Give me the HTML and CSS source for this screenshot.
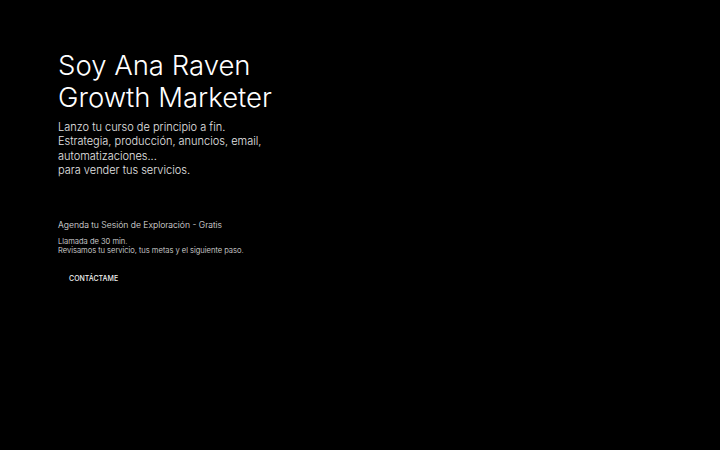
FILE: index.html
```html
<!DOCTYPE html>
<html lang="es">
<head>
<meta charset="utf-8">
<title>Ana Raven</title>
<link rel="stylesheet" href="styles.css">
</head>
<body>
<main class="hero">
  <h1 class="title"><span>Soy Ana Raven</span><span>Growth Marketer</span></h1>
  <p class="lead">Lanzo tu curso de principio a fin.<br>Estrategia, producción, anuncios, email,<br>automatizaciones...<br>para vender tus servicios.</p>
  <h2 class="cta-title">Agenda tu Sesión de Exploración - Gratis</h2>
  <p class="cta-text">Llamada de 30 min.<br>Revisamos tu servicio, tus metas y el siguiente paso.</p>
  <a class="cta-button" href="#">CONTÁCTAME</a>
</main>
</body>
</html>
```
FILE: styles.css
```css
html, body {
  margin: 0;
  padding: 0;
  background: #000;
  color: #fff;
  font-family: Inter, "Noto Sans", sans-serif;
}
.hero {
  display: flex;
  flex-direction: column;
  align-items: flex-start;
  padding: 49px 0 0 58px;
}
.title {
  display: flex;
  flex-direction: column;
  margin: 0;
  font-weight: 300;
  font-size: 27.5px;
  line-height: 32px;
  color: #fff;
}
.title span {
  display: block;
}
.lead {
  margin: 7px 0 0;
  font-size: 11px;
  line-height: 14.3px;
  font-weight: 300;
  color: #e6e6e6;
}
.cta-title {
  margin: 43px 0 0;
  font-size: 8.6px;
  line-height: 11px;
  font-weight: 300;
  color: #e6e6e6;
}
.cta-text {
  margin: 7px 0 0;
  font-size: 7.6px;
  line-height: 8.6px;
  font-weight: 300;
  color: #e6e6e6;
}
.cta-button {
  margin: 19px 0 0 11px;
  font-size: 7px;
  font-weight: 500;
  color: #f2f2f2;
  text-decoration: none;
}
```
